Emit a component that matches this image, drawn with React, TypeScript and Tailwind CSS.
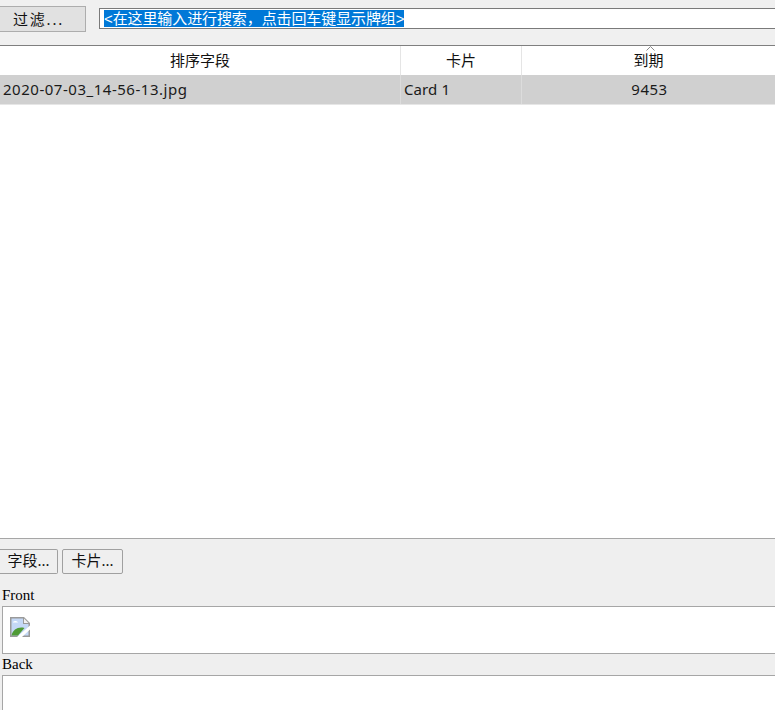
import React from "react";

const cjk = "font-['Noto_Sans','Noto_Sans_CJK_SC',sans-serif]";

function BrokenImage() {
  return (
    <svg width="20" height="20" viewBox="0 0 20 20" className="block">
      <path d="M0 0H14L20 6V20H0Z" fill="#9a9a9a" />
      <path d="M1.5 1.5H13V7H18.5V18.5H1.5Z" fill="#c4d8f6" />
      <path d="M14 1.5L18.5 6H14Z" fill="#f2f2f2" />
      <path d="M1.5 18.5C3 12.5 8 9.5 14.5 11L8 18.5Z" fill="#4f9a35" />
      <path d="M7 20L20 8.5V12.5L12 20Z" fill="#ffffff" />
      <path d="M3 5C4.5 3.5 7 4 8 5.5H3Z" fill="#ffffff" />
    </svg>
  );
}

export default function App() {
  return (
    <div className={`w-[775px] h-[710px] overflow-hidden flex flex-col bg-white text-[#111] ${cjk}`}>
      <div className="h-[46px] shrink-0 bg-[#f0f0f0] border-b border-[#7f7f7f] flex items-start">
        <div className="w-[86px] h-[26px] mt-[6px] bg-[#e1e1e1] border border-[#adadad] border-l-0 flex items-center pl-[13px] text-[15px] tracking-[1.8px] pt-[1px]">
          过滤...
        </div>
        <div className="flex-1 ml-[13px] mt-[8px] h-[21px] bg-white border-y border-l border-[#7a7a7a] flex items-center pl-[4px] text-[15px] leading-[17px] whitespace-nowrap">
          <span className="bg-[#0078d7] text-white tracking-[-0.1px] font-['Liberation_Sans','Noto_Sans_CJK_SC',sans-serif]">&lt;在这里输入进行搜索，点击回车键显示牌组&gt;</span>
        </div>
      </div>

      <div className="h-[29px] shrink-0 flex text-[15px] leading-[18px] bg-white">
        <div className="w-[401px] border-r border-[#e5e5e5] flex items-center justify-center pb-[1px]">排序字段</div>
        <div className="w-[121px] border-r border-[#e5e5e5] flex items-center justify-center pb-[1px]">卡片</div>
        <div className="relative flex-1 flex items-center justify-center pb-[1px]">
          到期
          <svg width="9" height="5" viewBox="0 0 9 5" className="absolute left-[124px] top-0">
            <path d="M0.5 4.5L4.5 0.5L8.5 4.5" fill="none" stroke="#8a8a8a" />
          </svg>
        </div>
      </div>

      <div className="h-[30px] shrink-0 flex items-center bg-[#d0d0d0] text-[15px] text-[#1a1a1a] border-b border-[#e6e6e6]">
        <div className="w-[401px] h-full border-r border-[#dcdcdc] flex items-center pl-[3px] tracking-[0.52px]">2020-07-03_14-56-13.jpg</div>
        <div className="w-[121px] h-full border-r border-[#dcdcdc] flex items-center pl-[3px] tracking-[0.1px]">Card 1</div>
        <div className="flex-1 text-center pl-[2px] tracking-[0.5px]">9453</div>
      </div>

      <div className="flex-1 bg-white" />

      <div className="h-[172px] shrink-0 bg-[#efefef] border-t border-[#a6a6a6] flex flex-col">
        <div className="flex gap-[4px] mt-[10px] h-[25px]">
          <div className="w-[58px] bg-[#efefef] border border-[#a0a0a0] border-l-0 rounded-r-[2px] flex items-center justify-center text-[15px] leading-[18px] pb-[3px]">字段...</div>
          <div className="w-[61px] bg-[#efefef] border border-[#a0a0a0] rounded-[2px] flex items-center justify-center text-[15px] leading-[18px] pb-[3px]">卡片...</div>
        </div>
        <div className="mt-[13px] pl-[2px] h-[19px] leading-[17px] text-[15px] text-black font-['Liberation_Serif',serif]">Front</div>
        <div className="ml-[2px] h-[48px] bg-white border-y border-l border-[#a6a6a6] pl-[7px] pt-[10px]">
          <BrokenImage />
        </div>
        <div className="mt-[1px] pl-[2px] h-[20px] leading-[18px] text-[15px] text-black font-['Liberation_Serif',serif]">Back</div>
        <div className="ml-[2px] flex-1 bg-white border-t border-l border-[#a6a6a6]" />
      </div>
    </div>
  );
}
